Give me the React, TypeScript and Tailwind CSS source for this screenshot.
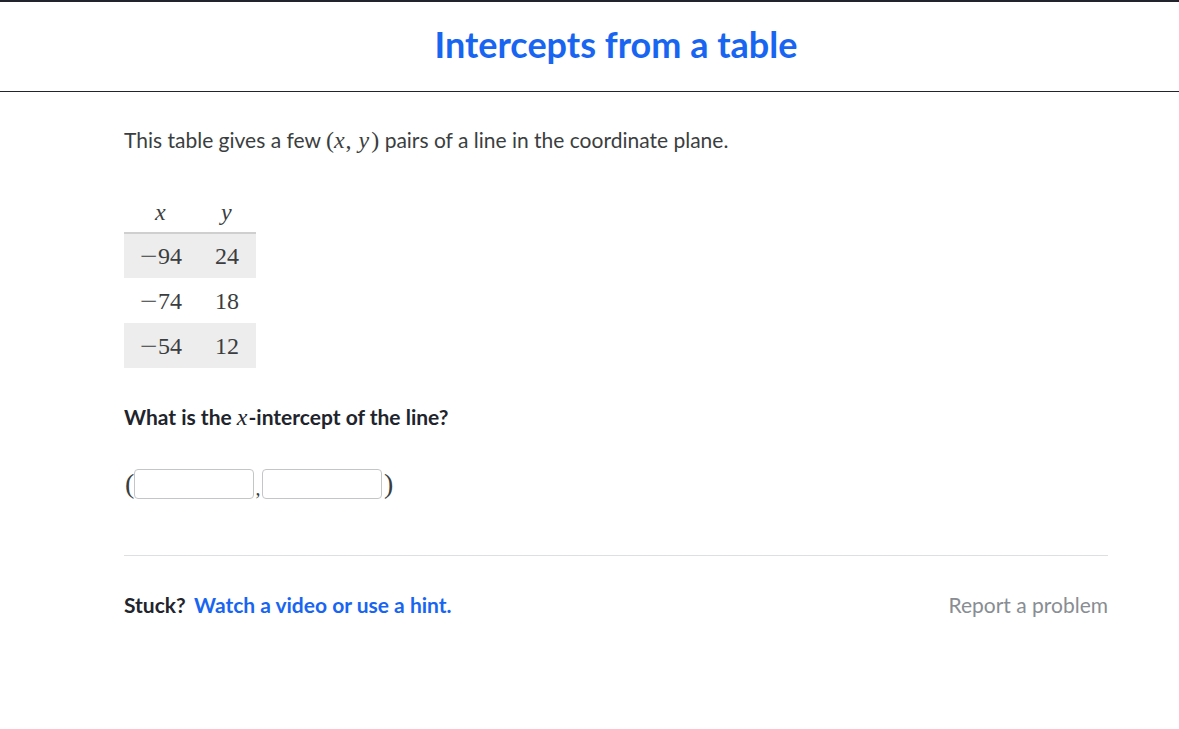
export default function App() {
  const rows = [
    { x: '94', y: '24' },
    { x: '74', y: '18' },
    { x: '54', y: '12' },
  ]
  const lato = "font-['Lato','Noto_Sans',sans-serif]"
  const serif = "font-['Liberation_Serif','DejaVu_Serif',serif]"

  return (
    <div className={`min-h-[729px] bg-white ${lato} text-[#21242c]`}>
      {/* Header */}
      <div className="h-[92px] border-t-2 border-b border-t-[#21242c] border-b-[#21242c]">
        <div className="ml-[124px] w-[984px] h-full pb-[5px] flex items-center justify-center">
          <h1 className="text-[36px] font-bold text-[#1865f2] leading-none">Intercepts from a table</h1>
        </div>
      </div>

      <div className="ml-[124px] w-[984px]">
        <p className="pt-[33px] text-[21px] leading-[30px] text-[#3b3e40]">
          This table gives a few{' '}
          <span className={`${serif} text-[24px]`}>
            (<i className="pr-[1px]">x</i>,<span className="ml-[7px]" /><i className="pr-[2px]">y</i>)
          </span>{' '}
          pairs of a line in the coordinate plane.
        </p>

        {/* Table */}
        <table className={`mt-[41px] ${serif} text-[24px] text-[#3b3e40]`}>
          <thead>
            <tr className="border-b-2 border-[#cfcfcf]">
              <th className="h-[36px] w-[76px] pl-[31px] pt-0 pb-[4px] leading-[32px] text-left font-normal italic">x</th>
              <th className="h-[36px] w-[56px] pl-[21px] pt-0 pb-[4px] leading-[32px] text-left font-normal italic">y</th>
            </tr>
          </thead>
          <tbody>
            {rows.map((r, i) => (
              <tr key={i} className={i % 2 === 0 ? 'bg-[#ededed]' : 'bg-white'}>
                <td className="h-[45px] pl-[16px] text-left">
                  <span className="inline-block w-[18px] scale-x-[1.3] origin-left">−</span>
                  {r.x}
                </td>
                <td className="h-[45px] pl-[15px] text-left">{r.y}</td>
              </tr>
            ))}
          </tbody>
        </table>

        <p className="mt-[34px] text-[21px] leading-[30px] font-bold">
          What is the <i className={`${serif} font-normal text-[24px] pr-[1px]`}>x</i>-intercept of the line?
        </p>

        {/* Answer */}
        <div className={`mt-[37px] flex items-center ${serif} text-[28px] text-[#3b3e40]`}>
          <span className="w-[10px] pl-[1px] leading-none">(</span>
          <input className="w-[120px] h-[30px] border border-[#c4c5c7] rounded-[4px] outline-none" />
          <span className="w-[8px] text-[20px] pt-[8px] text-center leading-none">,</span>
          <input className="w-[120px] h-[30px] border border-[#c4c5c7] rounded-[4px] outline-none" />
          <span className="pl-[2px] leading-none">)</span>
        </div>

        <div className="mt-[56px] border-t border-[#dedfe0]" />

        <div className="mt-[34px] flex items-center justify-between text-[21px] leading-[30px]">
          <div>
            <span className="font-bold">Stuck?</span>{' '}
            <span className="font-bold text-[#1865f2] ml-[3px]">Watch a video or use a hint.</span>
          </div>
          <span className="text-[#888d93]">Report a problem</span>
        </div>
      </div>
    </div>
  )
}
